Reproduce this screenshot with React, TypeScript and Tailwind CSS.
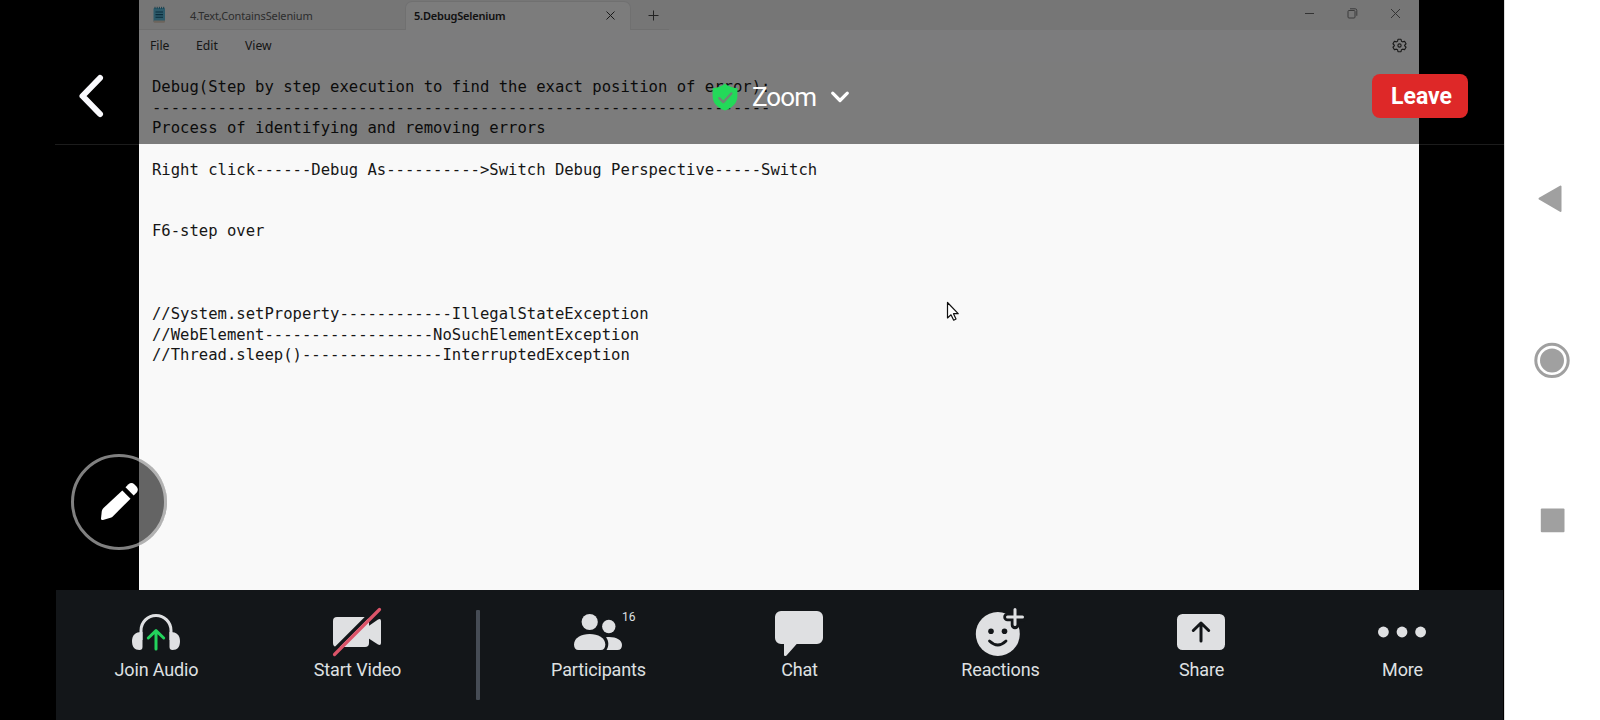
import React from "react";

const editorLines = [
  "Debug(Step by step execution to find the exact position of error):",
  "-".repeat(66),
  "Process of identifying and removing errors",
  "",
  "Right click------Debug As---------->Switch Debug Perspective-----Switch",
  "",
  "",
  "F6-step over",
  "",
  "",
  "",
  "//System.setProperty" + "-".repeat(12) + "IllegalStateException",
  "//WebElement" + "-".repeat(18) + "NoSuchElementException",
  "//Thread.sleep()" + "-".repeat(15) + "InterruptedException",
];

function NotepadIcon() {
  return (
    <svg width="14" height="18" viewBox="0 0 14 18">
      <rect x="1.500" y="2" width="11.500" height="14" rx="1" fill="#58b4d4" />
      <path d="M1.500 14.500h11.500v1.200a1 1 0 0 1-1 1H2.500a1 1 0 0 1-1-1z" fill="#d8c8b8" />
      <path d="M3 0.800v2M5.200 0.800v2M7.400 0.800v2M9.600 0.800v2M11.700 0.800v2" stroke="#2c7f9c" strokeWidth="1" />
      <path d="M3.500 6h7.500M3.500 8.600h7.500M3.500 11.200h7.500" stroke="#145a78" strokeWidth="1.100" />
    </svg>
  );
}

function Notepad() {
  return (
    <div className="relative h-[590px] w-[1280px] overflow-hidden bg-[#f9f9f9] font-['Noto_Sans',sans-serif]">
      <div className="flex h-[30px] items-stretch bg-[#ececed]">
        <div className="flex w-[266px] items-center border-b border-[#dededf] pt-px pl-[13px]">
          <NotepadIcon />
          <span className="ml-[24px] text-[11px] leading-none tracking-[-0.12px] text-[#5a5a5a]">4.Text,ContainsSelenium</span>
        </div>
        <div className="mt-px flex w-[226px] items-center justify-between rounded-t-[7px] border-x border-t border-[#e0e0e1] bg-[#f8f8f9] pr-[14px] pb-[2px] pl-[8px]">
          <span className="text-[11px] leading-none font-semibold tracking-[-0.2px] text-[#242424]">5.DebugSelenium</span>
          <svg width="11" height="11" viewBox="0 0 11 11" fill="none" stroke="#333" strokeWidth="1">
            <path d="M1.500 1.500l8 8M9.500 1.500l-8 8" />
          </svg>
        </div>
        <div className="flex w-[38px] items-center border-b border-[#dededf] pt-[2px] pl-[17px]">
          <svg width="11" height="11" viewBox="0 0 11 11" fill="none" stroke="#444" strokeWidth="1">
            <path d="M0.500 5.500h10M5.500 0.500v10" />
          </svg>
        </div>
        <div className="flex flex-1 items-center justify-end gap-[32px] pr-[18px] pb-[3px]">
          <svg width="11" height="11" viewBox="0 0 11 11" fill="none" stroke="#666" strokeWidth="1">
            <path d="M1 5.500h9" />
          </svg>
          <svg width="11" height="11" viewBox="0 0 11 11" fill="none" stroke="#777" strokeWidth="1">
            <rect x="1" y="2.500" width="7" height="7.500" rx="1" />
            <path d="M3 0.800h5.200a1.600 1.600 0 0 1 1.600 1.600v5.400" />
          </svg>
          <svg width="11" height="11" viewBox="0 0 11 11" fill="none" stroke="#666" strokeWidth="1">
            <path d="M1 1l9 9M10 1l-9 9" />
          </svg>
        </div>
      </div>
      <div className="flex h-[32px] items-center bg-[#f9f9fa] pr-[12px] pl-[11px] text-[12.200px] text-[#2e2e2e]">
        <span className="mt-px w-[46px]">File</span>
        <span className="mt-px w-[49px]">Edit</span>
        <span className="mt-px">View</span>
        <svg className="mb-[2px] ml-auto" width="15" height="15" viewBox="0 0 24 24" fill="none" stroke="#333" strokeWidth="1.800">
          <path d="M9.600 2h4.800l.7 3.100 2 1.100 3-.9 2.400 4.100-2.300 2.200v.8l2.300 2.200-2.400 4.100-3-.9-2 1.100-.7 3.100H9.600l-.7-3.100-2-1.100-3 .9-2.400-4.100 2.300-2.200v-.8L1.500 9.400l2.400-4.100 3 .9 2-1.100z" strokeLinejoin="round" />
          <circle cx="12" cy="12" r="2.600" />
        </svg>
      </div>
      <div className="pt-[15px] pl-[13px] font-['DejaVu_Sans_Mono',monospace] text-[15.57px] leading-[20.64px] text-[#161616]">
        {editorLines.map((line, i) => (
          <div key={i} className="h-[20.64px] whitespace-pre">
            {line}
          </div>
        ))}
      </div>
      <svg className="absolute top-[301px] left-[807px]" width="14" height="21" viewBox="0 0 14 21">
        <path d="M1.500 1.500V17L5 13.800 7.700 19.200 10 18 7.500 12.700H12.200z" fill="#fff" stroke="#111" strokeWidth="1.200" strokeLinejoin="round" />
      </svg>
    </div>
  );
}

function MeetingHeader() {
  return (
    <header className="absolute top-0 left-[55px] grid h-[144px] w-[1449px] grid-cols-3 items-center bg-black/50 font-[Roboto,sans-serif]">
      <svg className="mt-[48px] ml-[20px] self-start" width="32" height="96" viewBox="0 0 32 96" fill="none" stroke="#f9f9fd" strokeWidth="6" strokeLinecap="round" strokeLinejoin="round">
        <path d="M25 30L7.500 48 25 66" />
      </svg>
      <div className="flex items-center justify-center pt-[49px] pl-[3px]">
        <svg width="26" height="28" viewBox="0 0 26 28">
          <path d="M13 0.500C9.500 3.500 5.500 4.800 0.600 5.200V13c0 7 4.600 11.800 12.400 14.500C20.800 24.800 25.400 20 25.400 13V5.200C20.500 4.800 16.500 3.500 13 0.500z" fill="#23d959" />
          <path d="M7.300 15.200l4 4 8-8.700" fill="none" stroke="#6f8575" strokeWidth="2.400" strokeLinecap="round" strokeLinejoin="round" />
        </svg>
        <span className="mt-px ml-[14px] text-[26px] leading-none tracking-[-0.9px] text-white">Zoom</span>
        <svg className="ml-[14px]" width="20" height="14" viewBox="0 0 20 14" fill="none" stroke="#fff" strokeWidth="3.200" strokeLinecap="round" strokeLinejoin="round">
          <path d="M2.700 3.200L10 10.500 17.300 3.200" />
        </svg>
      </div>
      <button className="mt-[48px] mr-[36px] h-[44px] w-[96px] justify-self-end rounded-[8px] bg-[#de2828] pt-px pl-[3px] text-[23px] leading-none font-bold text-white">
        Leave
      </button>
    </header>
  );
}

const INK = "#dfe0e2";
const BAR = "#131619";

function AudioIcon() {
  return (
    <>
      <path d="M-15 8V-1.500a15 15 0 0 1 30 0V8" fill="none" stroke={INK} strokeWidth="3" />
      <path d="M-13.500 0v15a3 3 0 0 1-3 3c-5 0-7.500-3-7.500-9S-20 0-15 0z" fill={INK} />
      <path d="M13.500 0v15a3 3 0 0 0 3 3c5 0 7.500-3 7.500-9S20 0 15 0z" fill={INK} />
      <path d="M0 17V-1M-7.700 6L0-1.300 7.700 6" fill="none" stroke="#23d35c" strokeWidth="3" strokeLinecap="round" strokeLinejoin="round" />
    </>
  );
}

function VideoIcon() {
  return (
    <>
      <rect x="-24" y="-15" width="36" height="30" rx="4" fill={INK} />
      <path d="M11-5.500L21-12.600q3-1.400 3 1.600V11q0 3-3 1.600L11 6z" fill={INK} />
      <path d="M-28 23.200L20.500-25.300" stroke={BAR} strokeWidth="3.600" />
      <path d="M-22.500 22.500L22.500-22.500" stroke="#dc5469" strokeWidth="3.200" strokeLinecap="round" />
    </>
  );
}

function PeopleIcon() {
  return (
    <>
      <circle cx="-8.300" cy="-10" r="8.100" fill={INK} />
      <circle cx="10.800" cy="-5.500" r="6.700" fill={INK} />
      <path d="M8 5.200c9-1 16 2.300 16 7.800 0 3-1.500 5-4.500 5H8.500c2.500-4 2.500-9-.5-12.800z" fill={INK} />
      <path d="M-8.300 2C0 2 7.300 6 7.300 12.500c0 3.500-1.500 5.500-4.500 5.500h-22.300c-3 0-4.500-2-4.500-5.500C-24 6-16.600 2-8.300 2z" fill={INK} />
    </>
  );
}

function ChatIcon() {
  return (
    <path d="M-18-21h36a6 6 0 0 1 6 6V6a6 6 0 0 1-6 6H-2.300L-12.500 23.400q-2.500 1.600-2.500-1V12h-3a6 6 0 0 1-6-6v-21a6 6 0 0 1 6-6z" fill={INK} />
  );
}

function ReactionsIcon() {
  return (
    <>
      <circle cx="-2.200" cy="2" r="22" fill={INK} />
      <path d="M7.500-15h16M15-23v16" stroke={BAR} strokeWidth="8.500" strokeLinecap="round" />
      <path d="M7.500-15h15M15-22.500v15" stroke={INK} strokeWidth="3" strokeLinecap="round" />
      <circle cx="-9" cy="-0.700" r="2.800" fill={BAR} />
      <circle cx="4.500" cy="-0.700" r="2.800" fill={BAR} />
      <path d="M-10.500 9q8.300 8 16.500 0" fill="none" stroke={BAR} strokeWidth="2.800" strokeLinecap="round" />
    </>
  );
}

function ShareIcon() {
  return (
    <>
      <rect x="-24" y="-18" width="48" height="36" rx="5.500" fill={INK} />
      <path d="M0 9V-9M-7.700-1.500L0-9l7.700 7.500" fill="none" stroke={BAR} strokeWidth="3" strokeLinecap="round" strokeLinejoin="round" />
    </>
  );
}

function MoreIcon() {
  return (
    <>
      <circle cx="-18.600" cy="0" r="5.400" fill={INK} />
      <circle cx="0" cy="0" r="5.400" fill={INK} />
      <circle cx="18.600" cy="0" r="5.400" fill={INK} />
    </>
  );
}

function ToolbarItem({ label, badge, children }: { label: string; badge?: string; children: React.ReactNode }) {
  return (
    <button className="flex w-[201px] flex-col items-center pt-[16px]">
      <span className="relative">
        <svg className="block" width="61" height="52" viewBox="-30 -26 61 52">
          {children}
        </svg>
        {badge && <span className="absolute top-[5px] left-[54px] text-[12px] leading-none">{badge}</span>}
      </span>
      <span className="mt-[3px] text-[18px] leading-[18px] tracking-[-0.15px]">{label}</span>
    </button>
  );
}

function Toolbar() {
  return (
    <nav className="ml-[56px] flex h-[130px] w-[1447px] bg-[#131619] font-[Roboto,sans-serif] text-[#dfe0e2]">
      <ToolbarItem label="Join Audio"><AudioIcon /></ToolbarItem>
      <ToolbarItem label="Start Video"><VideoIcon /></ToolbarItem>
      <div className="flex w-[40px] justify-center pt-[20px]">
        <div className="h-[90px] w-[4px] rounded-[1px] bg-[#464c55]" />
      </div>
      <ToolbarItem label="Participants" badge="16"><PeopleIcon /></ToolbarItem>
      <ToolbarItem label="Chat"><ChatIcon /></ToolbarItem>
      <ToolbarItem label="Reactions"><ReactionsIcon /></ToolbarItem>
      <ToolbarItem label="Share"><ShareIcon /></ToolbarItem>
      <ToolbarItem label="More"><MoreIcon /></ToolbarItem>
    </nav>
  );
}

function SystemNav() {
  return (
    <aside className="flex w-[96px] flex-col items-center border-l border-[#dcdcdc] bg-white pt-[179px] pr-[2px]">
      <svg width="40" height="40" viewBox="-20 -20 40 40">
        <path d="M-12.500-0.300L8.500-12.500V12z" fill="#a0a0a0" stroke="#a0a0a0" strokeWidth="2" strokeLinejoin="round" />
      </svg>
      <svg className="mt-[121px]" width="40" height="40" viewBox="-20 -20 40 40">
        <circle cx="0" cy="0.400" r="16.200" fill="none" stroke="#a0a0a0" strokeWidth="3" />
        <circle cx="0" cy="0.400" r="12" fill="#a0a0a0" />
      </svg>
      <svg className="mt-[120px]" width="40" height="40" viewBox="-20 -20 40 40">
        <rect x="-11.200" y="-11.500" width="23.700" height="23.700" rx="1" fill="#a0a0a0" />
      </svg>
    </aside>
  );
}

export default function App() {
  return (
    <div className="flex h-[720px] w-[1600px] overflow-hidden bg-black">
      <main className="relative flex w-[1504px] flex-col">
        <div className="absolute top-[144px] left-[55px] h-px w-[1449px] bg-[#1c1c1c]" />
        <div className="flex pl-[139px]">
          <Notepad />
        </div>
        <MeetingHeader />
        <svg className="absolute top-[454px] left-[71px]" width="96" height="96" viewBox="-48 -48 96 96">
          <circle r="48" fill="#000" fillOpacity="0.600" />
          <circle r="46.500" fill="none" stroke="#fff" strokeOpacity="0.500" strokeWidth="3" />
          <g fill="#fff">
            <path d="M3.300-11.500L11.500-3.300-6 14.200q-1 1-2.500 1.600L-16 18q-2 .5-2-1.500L-17.200 9q.3-1.500 1.700-3z" />
            <path d="M6.500-14.700L9.500-17.700q3-2.500 6 .2l2 2q2.500 3 .2 6L14.700-6.500z" />
          </g>
        </svg>
        <Toolbar />
      </main>
      <SystemNav />
    </div>
  );
}
